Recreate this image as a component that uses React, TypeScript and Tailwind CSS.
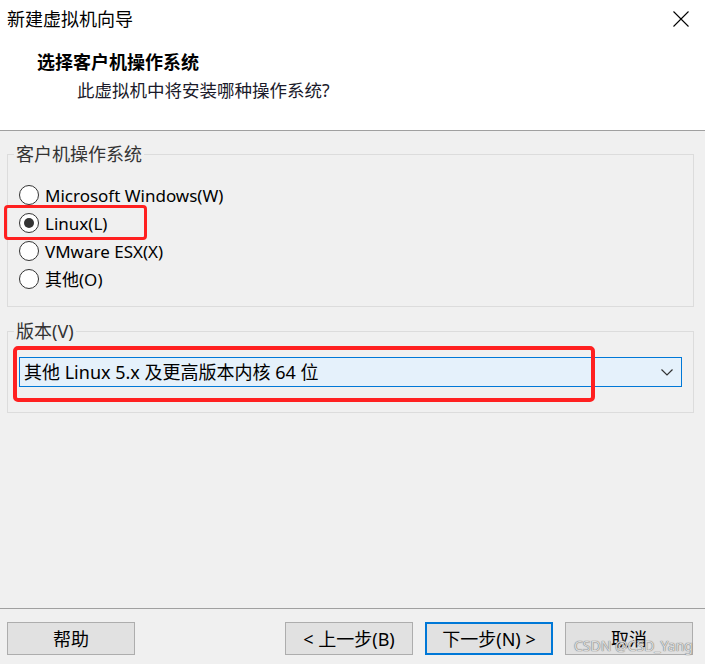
import React from 'react';

const font = { fontFamily: '"Segoe UI", "Noto Sans", "Noto Sans CJK SC", sans-serif' };

const options = [
  { label: 'Microsoft Windows(W)', checked: false },
  { label: 'Linux(L)', checked: true },
  { label: 'VMware ESX(X)', checked: false },
  { label: '其他(O)', checked: false },
];

const Radio: React.FC<{ checked: boolean; label: string }> = ({ checked, label }) => (
  <label className="flex items-center h-[28px] gap-[6px]">
    <span className="w-[20px] h-[20px] rounded-full border border-[#333] bg-white flex items-center justify-center">
      {checked && <span className="w-[10px] h-[10px] rounded-full bg-[#333]" />}
    </span>
    <span className="text-[17px] leading-none text-black">{label}</span>
  </label>
);

const Button: React.FC<{ children: React.ReactNode; primary?: boolean }> = ({ children, primary }) => (
  <button
    className={`w-[128px] h-[33px] bg-[#e1e1e1] text-[18px] leading-none text-black flex items-center justify-center ${
      primary ? 'border-2 border-[#0078d7]' : 'border border-[#adadad]'
    }`}
  >
    {children}
  </button>
);

export default function App() {
  return (
    <div className="w-[705px] h-[664px] bg-[#f0f0f0] flex flex-col relative overflow-hidden" style={font}>
      {/* header */}
      <div className="h-[131px] bg-white border-b border-[#a0a0a0] flex flex-col">
        <div className="flex items-center justify-between h-[38px] pl-[7px] pr-[16px]">
          <span className="text-[18px] leading-none text-black">新建虚拟机向导</span>
          <svg width="16" height="16" viewBox="0 0 16 16" className="text-black">
            <path d="M0.5 0.5 L15.5 15.5 M15.5 0.5 L0.5 15.5" stroke="currentColor" strokeWidth="1.1" fill="none" />
          </svg>
        </div>
        <div className="pl-[37px] mt-[15px] text-[18px] leading-none font-bold text-black">选择客户机操作系统</div>
        <div className="pl-[77px] mt-[11px] text-[17.5px] leading-none text-[#1a1a2a]">此虚拟机中将安装哪种操作系统?</div>
      </div>

      {/* body */}
      <div className="pl-[7px] pr-[11px] flex flex-col">
        <fieldset className="mt-[14px] h-[162px] border border-[#dcdcdc] px-[11px] pb-0">
          <legend className="px-[2px] -ml-[5px] text-[18px] leading-[18px] text-[#333]">客户机操作系统</legend>
          <div className="mt-[18px] flex flex-col">
            {options.map((o) => (
              <Radio key={o.label} checked={o.checked} label={o.label} />
            ))}
          </div>
        </fieldset>

        <fieldset className="mt-[15px] h-[91px] border border-[#dcdcdc] px-[11px]">
          <legend className="px-[2px] -ml-[5px] text-[18px] leading-[18px] text-[#333]">版本(V)</legend>
          <div className="mt-[17px] h-[30px] w-[663px] border border-[#0078d7] bg-[#e5f1fb] flex items-center justify-between pl-[4px] pr-[8px]">
            <span className="text-[18px] leading-none text-black">其他 Linux 5.x 及更高版本内核 64 位</span>
            <svg width="12" height="7" viewBox="0 0 12 7">
              <path d="M0.5 0.5 L6 6 L11.5 0.5" stroke="#333" strokeWidth="1.2" fill="none" />
            </svg>
          </div>
        </fieldset>
      </div>

      {/* footer */}
      <div className="mt-auto border-t border-[#a0a0a0] h-[56px] flex items-start pt-[13px] pl-[7px] pr-[12px]">
        <Button>帮助</Button>
        <div className="ml-auto flex gap-[12px]">
          <Button>&lt; 上一步(B)</Button>
          <Button primary>下一步(N) &gt;</Button>
          <div className="relative">
            <Button>取消</Button>
            <span
              className="absolute left-[9px] top-[17px] text-[14px] leading-none text-[#dcdcdc] whitespace-nowrap"
              style={{ textShadow: '0 0 1px #777, 0 0 1px #777' }}
            >
              CSDN @CSD_Yang
            </span>
          </div>
        </div>
      </div>

      {/* annotations */}
      <div className="absolute left-[4px] top-[205px] w-[143px] h-[35px] border-[3px] border-[#ff2020] rounded-[4px]" />
      <div className="absolute left-[13px] top-[346px] w-[582px] h-[56px] border-4 border-[#ff2020] rounded-[5px]" />
    </div>
  );
}
